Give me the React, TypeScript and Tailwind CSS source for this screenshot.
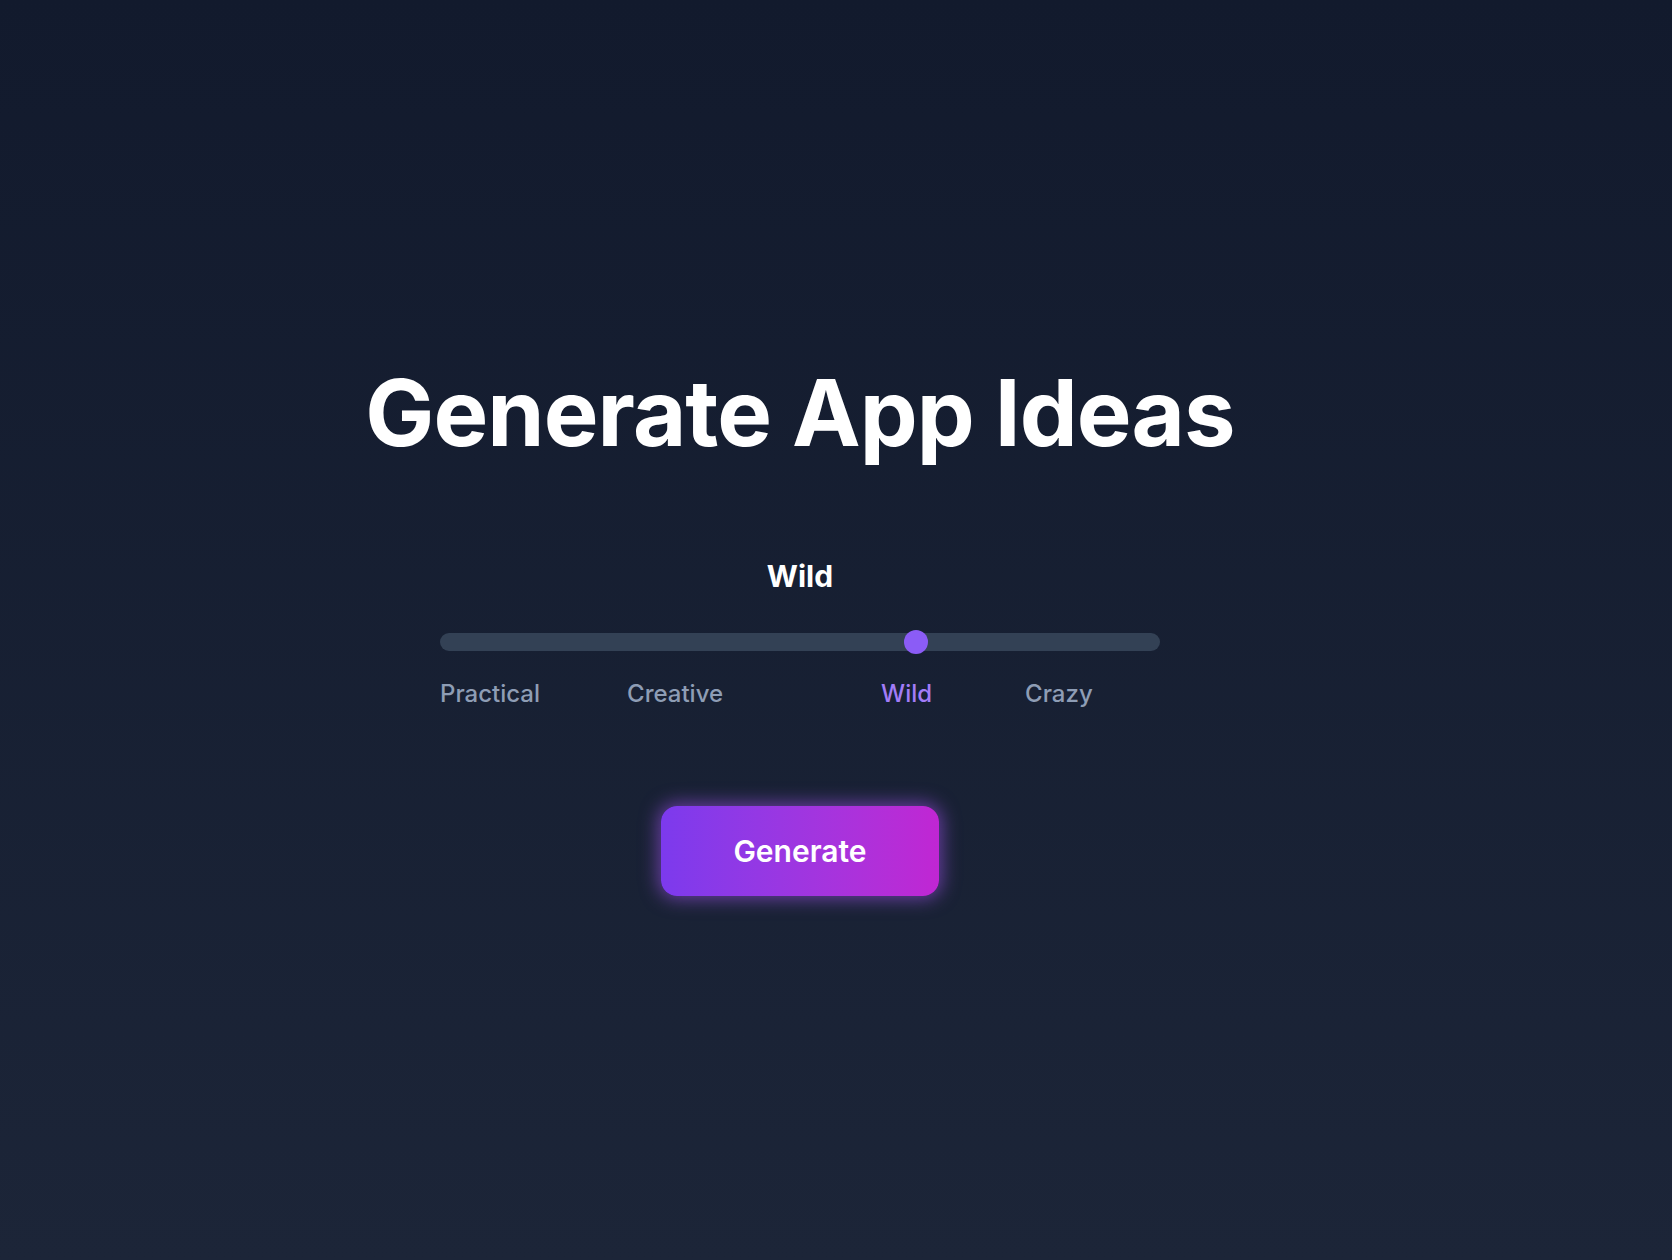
import { useState } from 'react';

const LEVELS = ['Practical', 'Creative', 'Wild', 'Crazy'];
// label offsets from the left end of the track, as in the reference
const LABEL_CLASS = ['ml-0', 'ml-[87px]', 'ml-[158px]', 'ml-[93px]'];

export default function App() {
  const [level, setLevel] = useState(2);

  return (
    <div className="min-h-[1260px] w-full bg-gradient-to-b from-[#121a2d] to-[#1c2538] font-['Inter',sans-serif] antialiased">
      <div className="flex min-h-[1260px] flex-col items-center justify-center pr-[72px] pt-[3px]">
        <h1 className="text-[92px] font-bold leading-none tracking-[-0.01em] text-white">Generate App Ideas</h1>

        <div className="mt-[102px] text-[30px] font-bold leading-none text-white">{LEVELS[level]}</div>

        <div className="mt-[39px] w-[720px]">
          <div className="relative flex h-6 items-center">
            <div className="h-[18px] w-full rounded-full bg-[#334155]" />
            <div
              className="pointer-events-none absolute top-0 h-6 w-6 rounded-full bg-[#8b5cf6]"
              style={{ left: `${(696 * level) / 3}px` }}
            />
            <input
              type="range"
              min={0}
              max={3}
              step={1}
              value={level}
              onChange={(e) => setLevel(Number(e.target.value))}
              className="absolute inset-0 h-6 w-full cursor-pointer opacity-0"
            />
          </div>

          <div className="mt-[28px] flex items-start">
            {LEVELS.map((l, i) => (
              <button
                key={l}
                onClick={() => setLevel(i)}
                className={`${LABEL_CLASS[i]} text-[24px] font-medium leading-none ${i === level ? 'text-[#a27cf7]' : 'text-[#8e9db5]'}`}
              >
                {l}
              </button>
            ))}
          </div>
        </div>

        <button className="mt-[100px] flex h-[90px] w-[278px] items-center justify-center rounded-2xl bg-gradient-to-r from-[#7c3aed] to-[#c026d3] text-[30px] font-semibold text-white shadow-[0_0_18px_3px_rgba(168,85,247,0.55)]">
          Generate
        </button>
      </div>
    </div>
  );
}
